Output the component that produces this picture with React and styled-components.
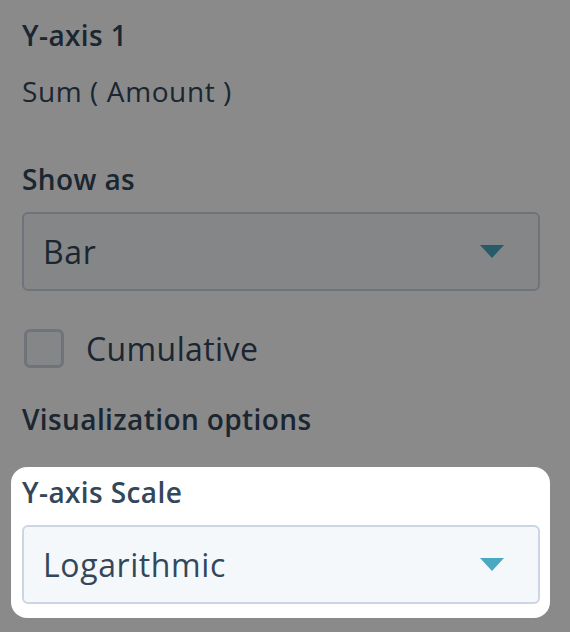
import styled, { createGlobalStyle } from "styled-components";

const GlobalStyle = createGlobalStyle`
  html, body {
    margin: 0;
    background: #ffffff;
    font-family: "Open Sans", "Noto Sans", sans-serif;
    color: #33475b;
  }
  body {
    min-height: 100vh;
    overflow: hidden;
  }
`;

const Panel = styled.div`
  display: flex;
  flex-direction: column;
  min-height: 100vh;
  box-sizing: border-box;
  padding: 17px 30px 0 22px;
  width: 570px;
`;

const Label = styled.div`
  font-size: 28px;
  line-height: 36px;
  font-weight: 600;
  letter-spacing: 0.4px;
  margin-top: ${(p) => p.$gap || 0}px;
`;

const Value = styled.div`
  font-size: 28px;
  line-height: 36px;
  letter-spacing: 0.6px;
  margin-top: ${(p) => p.$gap || 0}px;
`;

const SelectBox = styled.div`
  display: flex;
  align-items: center;
  justify-content: space-between;
  box-sizing: border-box;
  height: 79px;
  margin-top: 15px;
  padding: 0 34px 0 19px;
  background: #f5f8fa;
  border: 2px solid #cbd6e2;
  border-radius: 6px;
  font-size: 32px;
  letter-spacing: 0.6px;
`;

const Caret = () => (
  <svg width="24" height="13" viewBox="0 0 24 13">
    <path d="M0 0 H24 L12 13 Z" fill="#4ba8c1" />
  </svg>
);

const Select = ({ value }) => (
  <SelectBox>
    <span>{value}</span>
    <Caret />
  </SelectBox>
);

const CheckRow = styled.label`
  display: flex;
  align-items: center;
  gap: 22px;
  margin-top: 38px;
  font-size: 32px;
  line-height: 38px;
  letter-spacing: 0.4px;
`;

const Box = styled.span`
  box-sizing: border-box;
  width: 40px;
  height: 39px;
  border: 3px solid #cbd6e2;
  border-radius: 6px;
  background: #f5f8fa;
  margin-left: 2px;
`;

const Spotlight = styled.div`
  position: relative;
  display: flex;
  flex-direction: column;
  margin: 30px -10px 0 -11px;
  padding: 7px 10px 14px 11px;
  background: #ffffff;
  border-radius: 16px;
  box-shadow: 0 0 0 2000px rgba(0, 0, 0, 0.46);
`;

export default function App() {
  return (
    <>
      <GlobalStyle />
      <Panel>
        <Label>Y-axis 1</Label>
        <Value $gap={20}>Sum ( Amount )</Value>
        <Label $gap={52}>Show as</Label>
        <Select value="Bar" />
        <CheckRow>
          <Box />
          Cumulative
        </CheckRow>
        <Label $gap={33}>Visualization options</Label>
        <Spotlight>
          <Label>Y-axis Scale</Label>
          <Select value="Logarithmic" />
        </Spotlight>
      </Panel>
    </>
  );
}
